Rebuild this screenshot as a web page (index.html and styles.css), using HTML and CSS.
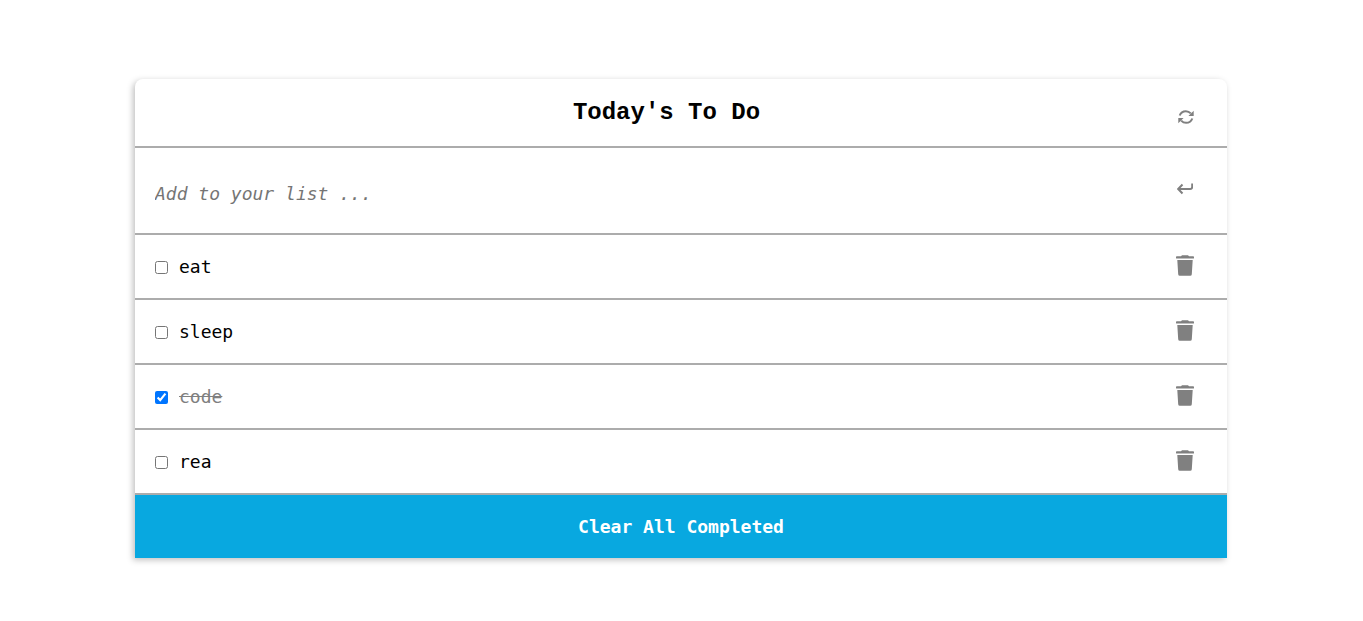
FILE: index.html
```html
<!DOCTYPE html>
<html lang="en">
<head>
<meta charset="utf-8">
<title>Today's To Do</title>
<link rel="stylesheet" href="styles.css">
</head>
<body>
<svg class="sprite" aria-hidden="true">
  <symbol id="trash" viewBox="0 0 18 21">
    <path d="M.8 1.300H5L6 .2h6l1 1.100h4.200q.8 0 .8.800v.8q0 .6-.6.600H.6Q0 3.500 0 2.900v-.8q0-.8.800-.8zM1.300 5h15.400l-.9 14.200q-.1 1.500-1.600 1.500H3.800q-1.500 0-1.600-1.500z"/>
  </symbol>
</svg>
<main class="card">
  <header class="row header">
    <h1 class="title">Today's To Do</h1>
    <button class="icon-button" type="button" aria-label="Refresh">
      <svg class="icon" viewBox="0 0 16 14"><path class="arc" d="M1.700 5.500C2.700 2.700 5.200 1.200 7.900 1.200c2 0 3.600.8 4.900 2.200M14.300 8.500c-1 2.800-3.500 4.300-6.200 4.300-2 0-3.600-.8-4.900-2.200"/><path d="M15.700.8v5.300h-5.300zM.3 13.200V7.900h5.300z"/></svg>
    </button>
  </header>
  <form class="row add">
    <input class="new-task" type="text" aria-label="New task" placeholder="Add to your list ...">
    <button class="icon-button enter" type="button" aria-label="Add">
      <svg class="icon stroke" viewBox="0 0 16 14"><path d="M15.200 1.500v3.500q0 2-2 2H1.500M5.500 2.500L1.200 7l4.300 4.500"/></svg>
    </button>
  </form>
  <ul class="list">
    <li class="row item">
      <label class="task"><input class="check" type="checkbox"><span>eat</span></label>
      <button class="icon-button" type="button" aria-label="Delete eat"><svg class="bin"><use href="#trash"/></svg></button>
    </li>
    <li class="row item">
      <label class="task"><input class="check" type="checkbox"><span>sleep</span></label>
      <button class="icon-button" type="button" aria-label="Delete sleep"><svg class="bin"><use href="#trash"/></svg></button>
    </li>
    <li class="row item">
      <label class="task done"><input class="check" type="checkbox" checked><span>code</span></label>
      <button class="icon-button" type="button" aria-label="Delete code"><svg class="bin"><use href="#trash"/></svg></button>
    </li>
    <li class="row item">
      <label class="task"><input class="check" type="checkbox"><span>rea</span></label>
      <button class="icon-button" type="button" aria-label="Delete rea"><svg class="bin"><use href="#trash"/></svg></button>
    </li>
  </ul>
  <button class="clear" type="button">Clear All Completed</button>
</main>
</body>
</html>
```
FILE: styles.css
```css
* {
  box-sizing: border-box;
}

body {
  margin: 0;
  padding: 79px 136px 60px 135px;
  background: #fff;
  font-family: Consolas, "DejaVu Sans Mono", monospace;
  font-size: 18px;
  line-height: 24px;
  color: #000;
}

.sprite {
  display: none;
}

.card {
  border-radius: 8px 8px 0 0;
  box-shadow: -2px 2px 6px rgba(0, 0, 0, 0.25);
}

.row {
  display: flex;
  align-items: center;
  padding: 0 33px 0 20px;
  border-bottom: 2px solid #acacac;
}

.header {
  padding-top: 19px;
  padding-bottom: 19px;
}

.title {
  flex: 1;
  margin: 0;
  font-family: "Courier New", "Liberation Mono", monospace;
  font-size: 24px;
  font-weight: 600;
  line-height: 29px;
  text-align: center;
}

.icon-button {
  display: flex;
  justify-content: center;
  width: 18px;
  padding: 0;
  border: 0;
  background: none;
  color: #808080;
}

.header .icon-button {
  width: 16px;
  padding-top: 9px;
}

.icon {
  width: 16px;
  height: 14px;
  fill: currentColor;
}

.arc,
.stroke {
  fill: none;
  stroke: currentColor;
  stroke-width: 2;
}

.bin {
  width: 18px;
  height: 21px;
  fill: currentColor;
}

.add {
  padding-top: 20px;
  padding-bottom: 15px;
}

.enter {
  padding-bottom: 8px;
}

.new-task {
  flex: 1;
  min-width: 0;
  height: 50px;
  padding: 0;
  border: 0;
  outline: 0;
  background: none;
  font: inherit;
}

.new-task::placeholder {
  color: #757575;
  font-style: italic;
}

.list {
  margin: 0;
  padding: 0;
  list-style: none;
}

.item {
  padding-top: 20px;
  padding-bottom: 19px;
}

.item .icon-button {
  padding-bottom: 3px;
}

.task {
  display: flex;
  flex: 1;
  align-items: center;
  gap: 11px;
}

.check {
  width: 13px;
  height: 13px;
  margin: 0;
}

.done {
  color: #808080;
  text-decoration: line-through;
}

.clear {
  display: block;
  width: 100%;
  padding: 20px 20px 19px;
  border: 0;
  background: #08a8e0;
  color: #fff;
  font: inherit;
  font-weight: bold;
}
```
